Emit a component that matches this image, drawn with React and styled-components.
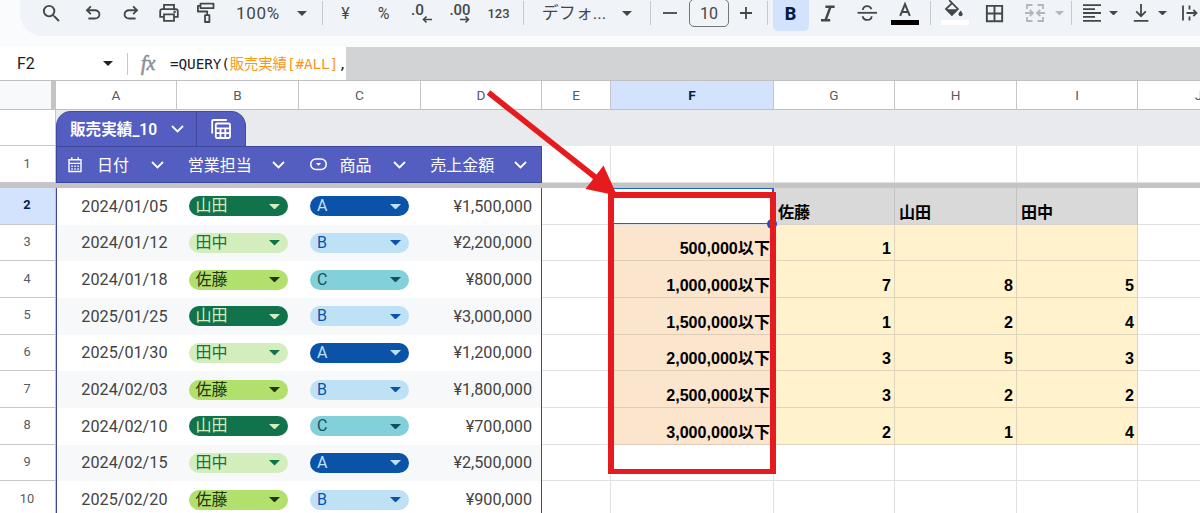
import React from 'react';
import styled, { createGlobalStyle } from 'styled-components';
import { MdSearch, MdOutlineBorderAll } from 'react-icons/md';

const GlobalStyle = createGlobalStyle`
  body {
    margin: 0;
    background: #fff;
    overflow: hidden;
    font-family: Roboto, 'Noto Sans CJK JP', sans-serif;
  }
  * { box-sizing: border-box; }
`;

const Sheet = styled.div`
  position: relative;
  width: 1200px;
  height: 513px;
  overflow: hidden;
  background: #fff;
`;

/* ---------- toolbar ---------- */

const TopArea = styled.div`
  height: 47px;
  padding-left: 20px;
  background: #f9fbfd;
`;

const Toolbar = styled.div`
  display: flex;
  align-items: center;
  height: 36px;
  padding-bottom: 10px;
  background: #f0f4f9;
  border-bottom-left-radius: 22px;
  overflow: hidden;
  color: #444746;
`;

const Tool = styled.div`
  display: flex;
  flex: none;
  align-items: center;
  justify-content: center;
  width: ${p => p.$w || 24}px;
  height: 26px;
  margin-left: ${p => p.$gap || 0}px;
  font-size: ${p => p.$size || 17}px;
  font-weight: ${p => p.$weight || 400};
  letter-spacing: ${p => p.$spacing || 0}px;
  white-space: nowrap;
  opacity: ${p => (p.$disabled ? 0.35 : 1)};
  svg { display: block; flex: none; }
`;

const FontName = styled(Tool)`
  padding-bottom: 3px;
`;

const Divider = styled.div`
  flex: none;
  width: 1px;
  height: 24px;
  margin-left: ${p => p.$gap}px;
  background: #c7c9cc;
`;

const SizeBox = styled(Tool)`
  height: 28px;
  border: 1px solid #747775;
  border-radius: 5px;
`;

const BoldButton = styled(Tool)`
  height: 36px;
  background: #d3e3fd;
  border-radius: 5px;
  color: #041e49;
`;

/* ---------- formula bar ---------- */

const FormulaBar = styled.div`
  display: flex;
  align-items: center;
  height: 34px;
  border-bottom: 1px solid #c0c0c0;
`;

const NameBox = styled.div`
  display: flex;
  align-items: center;
  justify-content: space-between;
  width: 128px;
  height: 22px;
  padding: 0 14px 0 17px;
  border-right: 1px solid #c7c7c7;
  font-size: 16px;
  color: #202124;
`;

const Fx = styled.div`
  width: 42px;
  padding-left: 13px;
  font: italic 20px 'Liberation Serif', serif;
  color: #8d9196;
  -webkit-text-stroke: 0.6px #8d9196;
`;

const Formula = styled.div`
  width: 176px;
  padding-bottom: 3px;
  font: 14.4px 'DejaVu Sans Mono', 'Noto Sans CJK JP', monospace;
  letter-spacing: -0.12px;
  white-space: pre;
  color: #202124;
  span { color: #f7981d; }
`;

const Redacted = styled.div`
  flex: 1;
  height: 33px;
  background: #d1d3d4;
`;

/* ---------- grid ---------- */

const Row = styled.div`
  display: flex;
  width: 1300px;
  height: ${p => p.$h || 36.667}px;
`;

const Corner = styled.div`
  width: 56px;
  background: #f8f9fa;
  border-right: 5px solid #c4c4c4;
  border-bottom: 1px solid #c0c0c0;
`;

const ColHead = styled.div`
  display: flex;
  align-items: center;
  justify-content: center;
  width: ${p => p.$w}px;
  border-right: 1px solid #c4c6c9;
  border-bottom: 1px solid #c0c0c0;
  background: ${p => (p.$active ? '#d3e3fd' : '#fff')};
  color: ${p => (p.$active ? '#041e49' : '#575b5f')};
  font-size: 13.6px;
  font-weight: ${p => (p.$active ? 700 : 400)};
`;

const RowHead = styled.div`
  display: flex;
  align-items: center;
  justify-content: center;
  flex: none;
  width: 56px;
  padding: 0 1px 2px 0;
  border-right: 1px solid #c4c6c9;
  border-bottom: 1px solid #c8c8c8;
  background: ${p => (p.$active ? '#d3e3fd' : '#fff')};
  color: ${p => (p.$active ? '#041e49' : '#575b5f')};
  font-size: 12.8px;
  font-weight: ${p => (p.$active ? 700 : 400)};
`;

const Band = styled.div`
  flex: 1;
  display: flex;
  align-items: flex-end;
  background: #e8eaed;
`;

const TableTab = styled.div`
  display: flex;
  width: 190px;
  height: 35px;
  border: 1px solid #444b9f;
  border-bottom: none;
  border-radius: 15px 15px 0 0;
  background: #545dc0;
  color: #fff;
`;

const TabName = styled.div`
  display: flex;
  align-items: center;
  justify-content: space-between;
  width: 140px;
  padding: 0 12px 3px 13px;
  border-right: 1px solid #3f479b;
  font-size: 15.6px;
  font-weight: 600;
  svg { position: relative; top: 1px; }
`;

const TabIcon = styled.div`
  display: flex;
  flex: 1;
  align-items: center;
  justify-content: center;
`;

const TableHead = styled.div`
  display: flex;
  width: 486px;
  border: 1px solid #3f479b;
  background: #545dc0;
  color: #fff;
`;

const HeadCell = styled.div`
  display: flex;
  align-items: center;
  width: ${p => p.$w}px;
  padding: 0 14px 0 ${p => p.$pad || 10}px;
  font-size: 16px;
  > :last-child { margin-left: auto; }
  span {
    margin-left: ${p => p.$indent || 0}px;
    padding-bottom: 2px;
  }
`;

const FreezeBar = styled.div`
  height: 5px;
  background: #c4c4c4;
`;

const TableCells = styled.div`
  display: flex;
  width: 486px;
  border-left: 1px solid #3f479b;
  border-right: 1px solid #3f479b;
  background: ${p => (p.$odd ? '#f6f8f9' : '#fff')};
`;

const TableCell = styled.div`
  display: flex;
  align-items: center;
  justify-content: ${p => (p.$right ? 'flex-end' : 'flex-start')};
  width: ${p => p.$w}px;
  padding: 0 ${p => p.$end || 9}px 0 ${p => (p.$right ? 0 : 10.5)}px;
  color: #434343;
  font-size: 16.2px;
`;

const CHIP = {
  山田: ['#11734b', '#d4edbc'],
  田中: ['#d4edbc', '#11734b'],
  佐藤: ['#b1e06c', '#253311'],
  A: ['#0a53a8', '#bfe1f6'],
  B: ['#bfe1f6', '#0a53a8'],
  C: ['#82d1da', '#14505a'],
};

const ChipBox = styled.div`
  display: flex;
  align-items: center;
  justify-content: space-between;
  width: 99px;
  height: 20px;
  padding: 0 8px 0 7px;
  border-radius: 10px;
  font-size: 16px;
  line-height: 20px;
  background: ${p => CHIP[p.$value][0]};
  color: ${p => CHIP[p.$value][1]};
`;

const FILL = { gray: '#d9d9d9', cream: '#fff2cc', peach: '#fce5cd' };
const LINE = { gray: '#c3c3c3', cream: '#dfd5bb', peach: '#decbb8' };

const Cell = styled.div`
  display: flex;
  align-items: flex-end;
  justify-content: ${p => (p.$left ? 'flex-start' : 'flex-end')};
  width: ${p => p.$w}px;
  padding: 0 3px 2px 4px;
  border-right: 1px solid ${p => LINE[p.$fill] || '#e1e1e1'};
  border-bottom: 1px solid ${p => (p.$fill === 'gray' ? '#d9d5cc' : LINE[p.$fill] || '#e1e1e1')};
  background: ${p => FILL[p.$fill] || '#fff'};
  color: #000;
  font: bold 16.1px/20px 'Liberation Sans', 'Noto Sans CJK JP', sans-serif;
`;

/* ---------- things lying over the grid ---------- */

const Selection = styled.div`
  position: absolute;
  left: 610px;
  top: 188px;
  width: 164px;
  height: 36px;
  border: solid #1a66cf;
  border-width: 1px 2px 1px 1px;
  &::after {
    content: '';
    position: absolute;
    right: -5px;
    bottom: -6px;
    width: 10px;
    height: 10px;
    border-radius: 50%;
    background: #0b57d0;
  }
`;

const RedFrame = styled.div`
  position: absolute;
  left: 608px;
  top: 192px;
  width: 168px;
  height: 282px;
  border: 6px solid #e61b1e;
  border-width: 6px 6px 5px;
`;

const Arrow = styled.svg`
  position: absolute;
  left: 480px;
  top: 84px;
`;

/* ---------- icons ---------- */

const Caret = ({ w = 10 }) => (
  <svg width={w} height={w / 2} viewBox="0 0 10 5"><path d="M0 0h10L5 5z" fill="currentColor" /></svg>
);

const Chevron = () => (
  <svg width="13" height="8" viewBox="0 0 13 8" fill="none" stroke="currentColor" strokeWidth="1.8">
    <path d="M1 1l5.5 5.5L12 1" />
  </svg>
);

const Undo = ({ flip }) => (
  <svg width="22" height="22" viewBox="0 -960 960 960" fill="currentColor" transform={flip ? 'scale(-1 1)' : undefined}>
    <path d="M280-200v-80h284q63 0 109.5-40T720-420q0-60-46.5-100T564-560H312l104 104-56 56-200-200 200-200 56 56-104 104h252q97 0 166.5 63T800-420q0 94-69.5 157T564-200H280Z" />
  </svg>
);

const Stroked = ({ w = 22, h = 22, children, sw = 1.8 }) => (
  <svg width={w} height={h} viewBox={`0 0 ${w} ${h}`} fill="none" stroke="currentColor" strokeWidth={sw}>
    {children}
  </svg>
);

const Print = () => (
  <Stroked>
    <path d="M6 6.5V2.8h10v3.7M5.8 14.8H2.2V9.2q0-2 2-2h13.6q2 0 2 2v5.6h-3.6" />
    <path d="M6 12.3h10v6.5H6z" />
    <circle cx="16.6" cy="9.8" r=".5" />
  </Stroked>
);

const Roller = () => (
  <Stroked h={24}>
    <path d="M5.5 2.6h13v4.6h-13zM5.5 4.9H2.9v5.6h9.3v3.4M10 14.2h4.4v6.8H10z" strokeLinejoin="round" />
  </Stroked>
);

const Decimals = ({ more }) => (
  <svg width="24" height="24" viewBox="0 0 24 24" overflow="visible" fill="currentColor">
    <text x={more ? 1.5 : 1} y="14" fontSize="15.5" fontWeight="500" textLength={more ? 21 : 13} lengthAdjust="spacingAndGlyphs">
      {more ? '.00' : '.0'}
    </text>
    <path
      d={more ? 'M12 18.5h8.5M17.5 15.5l3 3-3 3' : 'M22 18.5h-8.5M16.5 15.5l-3 3 3 3'}
      fill="none" stroke="currentColor" strokeWidth="1.6"
    />
  </svg>
);

const Italic = () => (
  <Stroked sw={2.4}><path d="M8.4 4.8h9.2M4 18.2h9.2M13.4 5L8.6 18" /></Stroked>
);

const Strike = () => (
  <Stroked w={24}>
    <path d="M2.5 10.8h19.5" />
    <path d="M7.8 8q.4-3.9 4.4-3.9 3.2 0 4.2 3M7.6 14.2q.8 3.7 4.6 3.7 4.4 0 4.4-3.7" />
  </Stroked>
);

const TextColor = () => (
  <svg width="28" height="24" viewBox="0 0 28 24">
    <path d="M9.2 14.8L14 3.2l4.8 11.6M10.6 11h6.8" fill="none" stroke="#444746" strokeWidth="2" />
    <path d="M0 19h28v5H0z" fill="#000" />
  </svg>
);

const FillColor = () => (
  <svg width="28" height="26" viewBox="0 0 28 26" overflow="visible">
    <path d="M8.2.2l8.7 8.7-6 6L5 9l5.8-5.6" fill="none" stroke="#444746" strokeWidth="1.8" />
    <path d="M4.8 9.2h12l-6 5.8z" fill="#444746" />
    <path d="M19.6 10.6q-2 2.4-2 3.6a2 2 0 004 0q0-1.2-2-3.6z" fill="#444746" />
    <path d="M0 20h28v5H0z" fill="#fff" />
  </svg>
);

const Merge = () => (
  <Stroked w={20} h={20}>
    <path d="M7.5 2H2v4M2 14v4h5.5M12.5 2H18v4M18 14v4h-5.5" />
    <path d="M0 10h7.5M4.8 7L8 10l-3.2 3M20 10h-7.5M15.2 7L12 10l3.2 3" />
  </Stroked>
);

const AlignLeft = () => (
  <Stroked w={18} h={18}><path d="M0 1.2h18M0 5.1h12M0 9h18M0 12.9h12M0 16.8h18" /></Stroked>
);

const AlignBottom = () => (
  <Stroked w={16} h={18}><path d="M8 0v12M3.2 7.4L8 12.2l4.8-4.8M.8 16.8h14.6" /></Stroked>
);

const Overflow = () => (
  <Stroked w={18} h={18}><path d="M2 1.5v15M8.5 1.5v4M8.5 12.5v4M5.5 9h10M12.3 5.8L15.5 9l-3.2 3.2" /></Stroked>
);

const TableCalc = () => (
  <Stroked>
    <path d="M2.2 15.5V3.2q0-1.2 1.2-1.2h13.4" />
    <rect x="5.8" y="5.5" width="14.2" height="14.5" rx="1.2" />
    <path d="M5.8 10.3H20M5.8 15.2H20M10.5 10.3V20M15.3 10.3V20" />
  </Stroked>
);

const Calendar = () => (
  <Stroked w={14} h={16} sw={1.4}>
    <path d="M1 2.8h12v11.7H1zM1 6.4h12M3.8.3v2.5M10.2.3v2.5" />
    <path d="M3.3 9.2h7.8M3.3 12h7.8" strokeDasharray="1.5 1.5" />
  </Stroked>
);

const ChipIcon = () => (
  <Stroked w={17} h={13} sw={1.5}>
    <rect x=".8" y="1" width="15.4" height="10.4" rx="5" />
    <path d="M5.8 5h5.4L8.5 7.8z" fill="currentColor" stroke="none" />
  </Stroked>
);

/* ---------- data ---------- */

const COLS = [
  ['A', 121], ['B', 122], ['C', 122], ['D', 121], ['E', 69],
  ['F', 163], ['G', 121], ['H', 122], ['I', 121], ['J', 122],
];

const ROWS = [
  { n: 2, date: '2024/01/05', who: '山田', item: 'A', price: '¥1,500,000', pivot: ['', '佐藤', '山田', '田中'] },
  { n: 3, date: '2024/01/12', who: '田中', item: 'B', price: '¥2,200,000', pivot: ['500,000以下', '1', '', ''] },
  { n: 4, date: '2024/01/18', who: '佐藤', item: 'C', price: '¥800,000', pivot: ['1,000,000以下', '7', '8', '5'] },
  { n: 5, date: '2025/01/25', who: '山田', item: 'B', price: '¥3,000,000', pivot: ['1,500,000以下', '1', '2', '4'] },
  { n: 6, date: '2025/01/30', who: '田中', item: 'A', price: '¥1,200,000', pivot: ['2,000,000以下', '3', '5', '3'] },
  { n: 7, date: '2024/02/03', who: '佐藤', item: 'B', price: '¥1,800,000', pivot: ['2,500,000以下', '3', '2', '2'] },
  { n: 8, date: '2024/02/10', who: '山田', item: 'C', price: '¥700,000', pivot: ['3,000,000以下', '2', '1', '4'] },
  { n: 9, date: '2024/02/15', who: '田中', item: 'A', price: '¥2,500,000' },
  { n: 10, date: '2025/02/20', who: '佐藤', item: 'B', price: '¥900,000' },
];

const Chip = ({ value }) => (
  <ChipBox $value={value}>{value}<Caret w={11} /></ChipBox>
);

function pivotFill(row, i) {
  if (!row.pivot) return undefined;
  if (row.n === 2) return i === 0 ? undefined : 'gray';
  return i === 0 ? 'peach' : 'cream';
}

function App() {
  return (
    <Sheet>
      <GlobalStyle />
      <TopArea>
        <Toolbar>
          <Tool $gap={19}><MdSearch size={23} /></Tool>
          <Tool $gap={18}><Undo /></Tool>
          <Tool $gap={13.5}><Undo flip /></Tool>
          <Tool $gap={14.5}><Print /></Tool>
          <Tool $gap={13}><Roller /></Tool>
          <Tool $gap={12} $w={56} $spacing={0.7}>100%</Tool>
          <Tool $gap={3.5}><Caret /></Tool>
          <Divider $gap={8.5} />
          <Tool $gap={10.5} $size={16}>¥</Tool>
          <Tool $gap={14} $size={16}>%</Tool>
          <Tool $gap={14}><Decimals /></Tool>
          <Tool $gap={14.5}><Decimals more /></Tool>
          <Tool $gap={12.5} $w={28} $size={13} $weight={500}>123</Tool>
          <Divider $gap={10.5} />
          <FontName $gap={16} $w={68}>デフォ...</FontName>
          <Tool $gap={7}><Caret /></Tool>
          <Divider $gap={11} />
          <Tool $gap={6.5}><Stroked w={14}><path d="M0 11h14" /></Stroked></Tool>
          <SizeBox $gap={7.5} $w={40} $size={16}>10</SizeBox>
          <Tool $gap={5}><Stroked w={14}><path d="M1 11h12M7 5v12" /></Stroked></Tool>
          <Divider $gap={9} />
          <BoldButton $gap={4.5} $w={36} $size={18} $weight={800}>B</BoldButton>
          <Tool $gap={7.5}><Italic /></Tool>
          <Tool $gap={14.5}><Strike /></Tool>
          <Tool $gap={11.5} $w={30}><TextColor /></Tool>
          <Divider $gap={10} />
          <Tool $gap={8.5} $w={30}><FillColor /></Tool>
          <Tool $gap={12.5}><MdOutlineBorderAll size={23} /></Tool>
          <Tool $gap={16.5} $disabled><Merge /></Tool>
          <Tool $gap={0.5} $disabled><Caret w={9} /></Tool>
          <Divider $gap={0} />
          <Tool $gap={8}><AlignLeft /></Tool>
          <Tool $gap={2.5} $w={14}><Caret w={9} /></Tool>
          <Tool $gap={8.5}><AlignBottom /></Tool>
          <Tool $gap={2.5} $w={14}><Caret w={9} /></Tool>
          <Tool $gap={8.5}><Overflow /></Tool>
        </Toolbar>
      </TopArea>

      <FormulaBar>
        <NameBox>F2<Caret /></NameBox>
        <Fx>fx</Fx>
        <Formula>=QUERY(<span>販売実績[#ALL]</span>,</Formula>
        <Redacted />
      </FormulaBar>

      <Row $h={29}>
        <Corner />
        {COLS.map(([name, w]) => (
          <ColHead key={name} $w={w} $active={name === 'F'}>{name}</ColHead>
        ))}
      </Row>

      <Row $h={36}>
        <RowHead />
        <Band>
          <TableTab>
            <TabName>販売実績_10<Chevron /></TabName>
            <TabIcon><TableCalc /></TabIcon>
          </TableTab>
        </Band>
      </Row>

      <Row $h={37}>
        <RowHead>1</RowHead>
        <TableHead>
          <HeadCell $w={121} $pad={11} $indent={15}><Calendar /><span>日付</span><Chevron /></HeadCell>
          <HeadCell $w={121}><span>営業担当</span><Chevron /></HeadCell>
          <HeadCell $w={122} $pad={11} $indent={13}><ChipIcon /><span>商品</span><Chevron /></HeadCell>
          <HeadCell $w={121}><span>売上金額</span><Chevron /></HeadCell>
        </TableHead>
        {COLS.slice(4).map(([name, w]) => <Cell key={name} $w={w} />)}
      </Row>
      <FreezeBar />

      {ROWS.map((row, r) => (
        <Row key={row.n}>
          <RowHead $active={row.n === 2}>{row.n}</RowHead>
          <TableCells $odd={r % 2 === 1}>
            <TableCell $w={121} $right $end={10.5}>{row.date}</TableCell>
            <TableCell $w={121.5}><Chip value={row.who} /></TableCell>
            <TableCell $w={121.5}><Chip value={row.item} /></TableCell>
            <TableCell $w={120} $right>{row.price}</TableCell>
          </TableCells>
          <Cell $w={69} />
          {COLS.slice(5, 9).map(([name, w], i) => (
            <Cell key={name} $w={w} $left={row.n === 2} $fill={pivotFill(row, i)}>
              {row.pivot && row.pivot[i]}
            </Cell>
          ))}
          <Cell $w={122} />
        </Row>
      ))}

      <Selection />
      <RedFrame />
      <Arrow width="145" height="120" viewBox="480 84 145 120" fill="#e61b1e">
        <path d="M488.5 92.5L600 181" stroke="#e61b1e" strokeWidth="5.6" />
        <path d="M603.5 165.5L617 195.5L585.5 189z" />
      </Arrow>
    </Sheet>
  );
}

export default App;
